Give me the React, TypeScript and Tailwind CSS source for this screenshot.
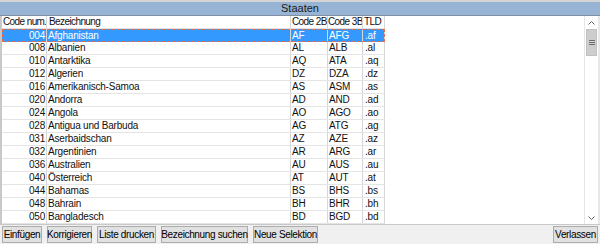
import React from "react";

const rows: [string, string, string, string, string][] = [
  ["004", "Afghanistan", "AF", "AFG", ".af"],
  ["008", "Albanien", "AL", "ALB", ".al"],
  ["010", "Antarktika", "AQ", "ATA", ".aq"],
  ["012", "Algerien", "DZ", "DZA", ".dz"],
  ["016", "Amerikanisch-Samoa", "AS", "ASM", ".as"],
  ["020", "Andorra", "AD", "AND", ".ad"],
  ["024", "Angola", "AO", "AGO", ".ao"],
  ["028", "Antigua und Barbuda", "AG", "ATG", ".ag"],
  ["031", "Aserbaidschan", "AZ", "AZE", ".az"],
  ["032", "Argentinien", "AR", "ARG", ".ar"],
  ["036", "Australien", "AU", "AUS", ".au"],
  ["040", "Österreich", "AT", "AUT", ".at"],
  ["044", "Bahamas", "BS", "BHS", ".bs"],
  ["048", "Bahrain", "BH", "BHR", ".bh"],
  ["050", "Bangladesch", "BD", "BGD", ".bd"],
];

const buttons: [string, string][] = [
  ["Einfügen", "w-[40px]"],
  ["Korrigieren", "w-[45px]"],
  ["Liste drucken", "w-[59px]"],
  ["Bezeichnung suchen", "w-[87px]"],
  ["Neue Selektion", "w-[65px]"],
];

function Btn({ label, w }: { label: string; w: string }) {
  return (
    <button
      className={`${w} h-[17px] bg-[#e1e1e1] border border-[#adadad] text-[10px] tracking-[-0.35px] leading-none text-black whitespace-nowrap flex items-center justify-center`}
    >
      {label}
    </button>
  );
}

const cell = "h-full flex items-center whitespace-nowrap overflow-hidden border-r border-[#d6d6d6]";

export default function App() {
  return (
    <div
      className="w-[600px] h-[244px] bg-[#f0f0f0] flex flex-col overflow-hidden border-t-2 border-[#d4d4d4]"
      style={{ fontFamily: '"Liberation Sans", Arial, sans-serif' }}
    >
      <div className="h-[14px] shrink-0 bg-[#98b4d4] border-b border-[#7f8fa4] flex items-center justify-center text-[11px] text-[#1a1a1a] leading-none">
        Staaten
      </div>
      <div className="flex-1 flex border-l-2 border-[#c8c8c8] border-r-2 border-r-[#e8e8e8] bg-white min-h-0">
        <div className="flex-1 text-[10px] tracking-[-0.2px] leading-none text-[#111]">
          <div className="flex h-[13px] w-[383px] items-center border-b border-[#e0e0e0] tracking-[-0.6px]">
            <div className={`w-[45px] pl-[1px] ${cell}`}>Code num.</div>
            <div className={`w-[244px] pl-[2px] ${cell}`}>Bezeichnung</div>
            <div className={`w-[37px] pl-[1px] ${cell}`}>Code 2B</div>
            <div className={`w-[35px] pl-0 ${cell}`}>Code 3B</div>
            <div className={`w-[22px] pl-[1px] ${cell}`}>TLD</div>
          </div>
          {rows.map((r, i) => {
            const sel = i === 0;
            return (
              <div
                key={r[0]}
                className={
                  sel
                    ? "flex h-[13px] w-[383px] items-center bg-[#3399ff] text-white outline outline-1 outline-dashed outline-offset-[-1px] outline-[#e07050]"
                    : "flex h-[13px] w-[383px] items-center border-b border-[#e4e4e4]"
                }
              >
                <div className={`w-[45px] pr-[1px] justify-end ${cell}`}>{r[0]}</div>
                <div className={`w-[244px] pl-[1px] ${cell}`}>{r[1]}</div>
                <div className={`w-[37px] pl-[1px] ${cell}`}>{r[2]}</div>
                <div className={`w-[35px] pl-[1px] ${cell}`}>{r[3]}</div>
                <div className={`w-[22px] pl-[2px] ${cell}`}>{r[4]}</div>
              </div>
            );
          })}
        </div>
        <div className="w-[14px] flex flex-col border-l border-[#e6e6e6] bg-white">
          <div className="h-[13px] flex items-center justify-center">
            <svg width="7" height="4" viewBox="0 0 7 4"><path d="M0.5 3.5 L3.5 0.5 L6.5 3.5" fill="none" stroke="#606060" strokeWidth="1" /></svg>
          </div>
          <div className="h-[27px] mx-[1px] bg-[#cdcdcd] border border-[#c0c0c0] flex items-center justify-center">
            <svg width="6" height="6" viewBox="0 0 6 6"><path d="M0 0.5H6M0 2.5H6M0 4.5H6" stroke="#707070" strokeWidth="1" /></svg>
          </div>
          <div className="flex-1" />
          <div className="h-[13px] flex items-center justify-center">
            <svg width="7" height="4" viewBox="0 0 7 4"><path d="M0.5 0.5 L3.5 3.5 L6.5 0.5" fill="none" stroke="#606060" strokeWidth="1" /></svg>
          </div>
        </div>
      </div>
      <div className="h-[20px] shrink-0 flex items-center px-[2px] gap-[5px] border-t border-[#c8c8c8] bg-[#f0f0f0]">
        {buttons.map(([b, w]) => (
          <Btn key={b} label={b} w={w} />
        ))}
        <div className="flex-1" />
        <Btn label="Verlassen" w="w-[45px]" />
      </div>
    </div>
  );
}
